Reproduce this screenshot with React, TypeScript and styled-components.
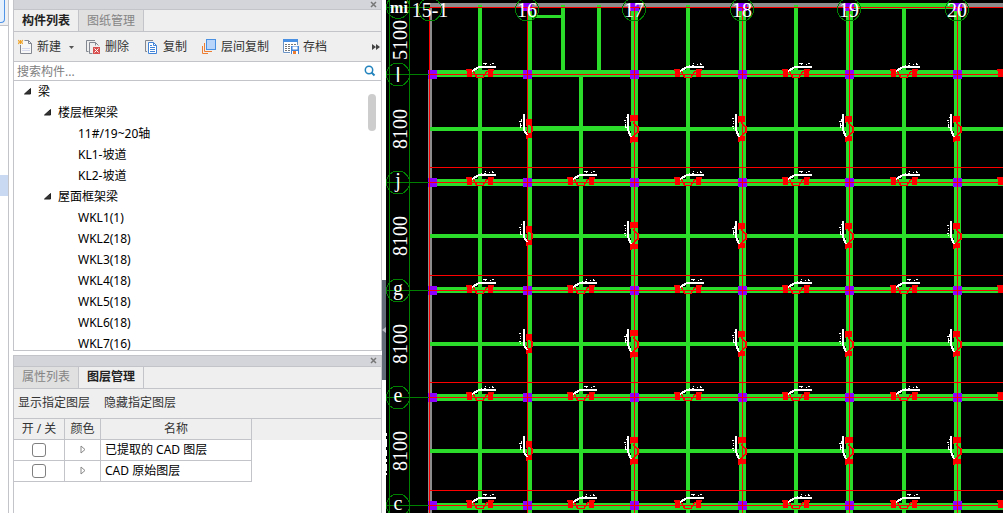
import React from "react";
import styled, { createGlobalStyle } from "styled-components";

const LINE = "#c3c4c9";
const BEAM = "#2bdc2b";
const AXIS = "#ff0000";
const COLUMN = "#8b00ff";
const GUIDE = "#008000";

const Global = createGlobalStyle`
  * { box-sizing: border-box; }
  html, body { margin: 0; background: #fff; }
  body, button, input { font-family: "Noto Sans", "Noto Sans CJK SC", sans-serif; font-size: 12px; }
  button { border: 0; padding: 0; background: none; color: inherit; }
`;

const Page = styled.main`
  display: flex;
  height: 100vh;
  overflow: hidden;
  background: #fff;
`;

const EdgeDock = styled.aside`
  flex: none;
  display: flex;
  flex-direction: column;
  width: 9px;
  border-right: 1px solid ${LINE};
`;
const EdgeHead = styled.div`
  height: 26px;
  background: #eff0f1;
  border-bottom: 1px solid ${LINE};
`;
const EdgeButton = styled.div`
  width: 5px;
  height: 23px;
  border: 1px solid #4f94e6;
  border-width: 0 1px 1px 0;
  border-radius: 0 0 4px 0;
  background: #e4f0fd;
`;
const EdgeSelection = styled.div`
  height: 21px;
  margin-top: 149px;
  background: #c9d9f1;
`;

const Dock = styled.section`
  flex: none;
  display: flex;
  flex-direction: column;
  gap: 4px;
  width: 369px;
  margin-left: 4px;
`;

const Panel = styled.section<{ $grow: number; $first?: boolean }>`
  flex: ${(p) => p.$grow} 1 0;
  min-height: 0;
  display: flex;
  flex-direction: column;
  overflow: hidden;
  border: 1px solid ${LINE};
  border-top-width: ${(p) => (p.$first ? 0 : 1)}px;
  border-bottom-width: ${(p) => (p.$first ? 1 : 0)}px;
`;

const TitleBar = styled.header<{ $h: number }>`
  flex: none;
  display: flex;
  justify-content: flex-end;
  align-items: center;
  height: ${(p) => p.$h}px;
  padding-right: 4px;
  background: #d3d5da;
  border-bottom: 1px solid ${LINE};
`;
const CloseButton = styled.button`
  display: flex;
`;

const Tabs = styled.div`
  flex: none;
  display: flex;
  height: 22px;
  background: #efefef;
  border-bottom: 1px solid ${LINE};
`;
const Tab = styled.button<{ $active?: boolean }>`
  width: 65px;
  border-right: 1px solid ${LINE};
  background: ${(p) => (p.$active ? "#efefef" : "#e0e0e0")};
  color: ${(p) => (p.$active ? "#222" : "#858585")};
  font-weight: ${(p) => (p.$active ? 700 : 400)};
  line-height: 20px;
`;

const Toolbar = styled.div<{ $gap: number }>`
  flex: none;
  display: flex;
  align-items: center;
  gap: ${(p) => p.$gap}px;
  height: 30px;
  padding: 0 1px 0 4px;
  background: #efefef;
  border-bottom: 1px solid ${LINE};
  color: #333;
`;
const ToolButton = styled.button`
  display: flex;
  align-items: center;
  gap: 3px;
  line-height: 18px;
  white-space: nowrap;
  svg { overflow: visible; }
`;
const MoreButton = styled(ToolButton)`
  margin-left: auto;
`;

const SearchRow = styled.label`
  flex: none;
  display: flex;
  align-items: center;
  height: 19px;
  padding: 0 5px 0 3px;
  border-bottom: 1px solid ${LINE};
`;
const SearchInput = styled.input`
  flex: 1;
  min-width: 0;
  height: 18px;
  padding: 0;
  border: 0;
  outline: 0;
  &::placeholder { color: #808080; opacity: 1; }
`;

const TreeArea = styled.div`
  flex: 1;
  min-height: 0;
  display: flex;
  justify-content: space-between;
  overflow: hidden;
`;
const Tree = styled.ul`
  margin: 0;
  padding: 0;
  list-style: none;
`;
const TreeRow = styled.li<{ $level: number }>`
  display: flex;
  align-items: center;
  gap: 7px;
  height: 21px;
  padding-left: ${(p) => 10 + p.$level * 20}px;
  line-height: 20px;
  color: #000;
  white-space: nowrap;
`;
const Twisty = styled.svg`
  flex: none;
  width: 7px;
  height: 7px;
`;
const TreeIndent = styled.span`
  width: 7px;
`;
const ScrollThumb = styled.div`
  width: 8px;
  height: 37px;
  margin: 13px 5px 0 0;
  border-radius: 4px;
  background: #cdcdcd;
`;

const LayerTable = styled.table`
  width: 100%;
  border-collapse: separate;
  border-spacing: 0;
  table-layout: fixed;
  th, td {
    height: 21px;
    padding: 0;
    border-right: 1px solid ${LINE};
    border-bottom: 1px solid ${LINE};
    line-height: 18px;
    text-align: center;
    font-weight: 400;
  }
  th { background: #efefef; color: #333; line-height: 20px; }
  th:last-child, td:last-child { border: 0; }
`;
const NameCell = styled.td`
  && { padding-left: 4px; text-align: left; }
`;
const Check = styled.input`
  appearance: none;
  display: block;
  width: 14px;
  height: 14px;
  margin: 0 auto;
  border: 1px solid #808080;
  border-radius: 3px;
  background: #fff;
`;
const ExpandButton = styled.button`
  display: block;
  margin: 0 auto;
  height: 9px;
  svg { display: block; }
`;

const Splitter = styled.div`
  flex: none;
  display: flex;
  flex-direction: column;
  justify-content: center;
  width: 4px;
  padding-top: 147px;
`;
const SplitterGrip = styled.button`
  display: flex;
  align-items: center;
  height: 100px;
  background: #626b78;
`;

const Viewport = styled.section`
  flex: 1;
  min-width: 0;
  background: #000;
  overflow: hidden;
`;
const Drawing = styled.svg`
  display: block;
  width: 100%;
  height: 100%;
`;
const AxisText = styled.text<{ $plain?: boolean }>`
  fill: #fff;
  font-family: ${(p) => (p.$plain ? '"Liberation Sans", sans-serif' : '"Liberation Serif", serif')};
  font-size: 20px;
  text-anchor: middle;
`;
const HeavyAxisText = styled(AxisText)`
  font-size: 16px;
  font-weight: 700;
`;

const CloseIcon = () => (
  <svg width="7" height="7" viewBox="0 0 7 7"><path d="M1 1l5 5M6 1L1 6" stroke="#777" strokeWidth="1.5" /></svg>
);
const NewIcon = () => (
  <svg width="16" height="16" viewBox="0 0 16 16" fill="none">
    <path d="M6.500 1.500H10.500L13.500 4.500V14.500H2.500V6" fill="#f7f7f7" stroke="#828790" />
    <path d="M10.500 1.500V4.500H13.500" stroke="#828790" />
    <path d="M4 9.500H12M4 11.500H12" stroke="#d6d8ec" />
    <path d="M0 1l5 4M5 1L0 5M2.500 1v4M0 3h5" stroke="#f0a020" />
  </svg>
);
const DeleteIcon = () => (
  <svg width="16" height="16" viewBox="0 0 16 16" fill="none" stroke="#828790">
    <path d="M9 1.500H.5V12.500H2.500" />
    <path d="M6.500 14.500H3.500V3.500H9.500L12.500 6.500" />
    <path d="M9.500 3.500V6.500" />
    <rect x="7" y="8" width="7" height="7" fill="#d95050" stroke="none" />
    <path d="M8.500 9.500l4 4M12.500 9.500l-4 4" stroke="#fff" />
  </svg>
);
const CopyIcon = () => (
  <svg width="16" height="16" viewBox="0 0 16 16" fill="none" stroke="#828790">
    <path d="M9 1.500H1.500V12.500H3" />
    <path d="M4.500 3.500H9.500L12.500 6.500V14.500H4.500Z" fill="#fff" stroke="#4284d8" />
    <path d="M9.500 3.500V6.500H12.500M6 8.500h5M6 10.500h5M6 12.500h5M6 6.500h2" stroke="#4284d8" />
  </svg>
);
const LayerCopyIcon = () => (
  <svg width="16" height="16" viewBox="0 0 16 16" fill="none">
    <rect x="4.500" y="0.500" width="9" height="10" fill="#b9d6fa" stroke="#4a90e2" />
    <path d="M2.500 4V12.500H10M.5 7V14.500H6" stroke="#ed7d31" />
  </svg>
);
const SaveIcon = () => (
  <svg width="16" height="16" viewBox="0 0 16 16" fill="none">
    <path d="M-.5.500H13.500V14.500H-.5Z" fill="#fff" />
    <path d="M-.5 13.500V.500H13.500V6M-.5 13.500H6" stroke="#6b94c4" />
    <path d="M-1 1.500H14" stroke="#4a90e2" strokeWidth="3" />
    <path d="M1 5.500H12M1 7.500H6M1 9.500H6M1 11.500H6" stroke="#777" strokeDasharray="2 1" />
    <path d="M7 7H15V15H7Z" fill="#4284d8" />
    <path d="M8.500 7.500H13.500V10.500H8.500Z" fill="#fff" />
    <path d="M8 12H14V15H8Z" fill="#fff" />
    <path d="M9 12H12V15H9Z" fill="#ed7d31" />
  </svg>
);
const SearchIcon = () => (
  <svg width="12" height="12" viewBox="0 0 12 12" fill="none" stroke="#2384bd">
    <circle cx="5" cy="5" r="3.700" strokeWidth="1.500" />
    <path d="M7.500 7.500L10.500 10.500" strokeWidth="2" />
  </svg>
);

const treeItems: { level: number; label: string; open?: boolean }[] = [
  { level: 0, label: "梁", open: true },
  { level: 1, label: "楼层框架梁", open: true },
  { level: 2, label: "11#/19~20轴" },
  { level: 2, label: "KL1-坡道" },
  { level: 2, label: "KL2-坡道" },
  { level: 1, label: "屋面框架梁", open: true },
  { level: 2, label: "WKL1(1)" },
  { level: 2, label: "WKL2(18)" },
  { level: 2, label: "WKL3(18)" },
  { level: 2, label: "WKL4(18)" },
  { level: 2, label: "WKL5(18)" },
  { level: 2, label: "WKL6(18)" },
  { level: 2, label: "WKL7(16)" },
];

const layers = ["已提取的 CAD 图层", "CAD 原始图层"];

// Plan data, in drawing units (one unit is one pixel).
const FAR = 3000;
const axisRows = [
  { y: 74, name: "l", top: 70, h: 7 },
  { y: 182, name: "j", top: 179, h: 7 },
  { y: 290, name: "g", top: 287, h: 6 },
  { y: 397, name: "e", top: 394, h: 7 },
  { y: 505, name: "c", top: 503, h: 7 },
];
const axisCols = [
  { x: 527, name: "16", left: 528, w: 4 },
  { x: 634, name: "17", left: 631, w: 7 },
  { x: 742, name: "18", left: 739, w: 7 },
  { x: 849, name: "19", left: 846, w: 7 },
  { x: 957, name: "20", left: 954, w: 7 },
];
const midRows = [127, 234, 342, 449];
const midCols = [
  { x: 478, y: 5 }, { x: 579, y: 77 }, { x: 686, y: 5 }, { x: 794, y: 5 }, { x: 902, y: 9 },
];
const rowMarks = [480, 581, 688, 796, 904, 1011];

/** Support symbol with its leader, on a horizontal beam. */
const RowMark = ({ x, y, n }: { x: number; y: number; n: number }) => (
  <g transform={`translate(${x} ${y})`}>
    <path d="M-14-5h6v8h-5v-6h-1zM8-5h6v2h-1v6h-5z" fill={AXIS} />
    <path d="M-7-3L-3 3.500H3L7-3" fill="none" stroke={AXIS} strokeWidth="1.500" />
    <path d="M-8-3L-1-7" fill="none" stroke="#fff" strokeWidth="2" />
    <rect x="-1" y="-8" width="17" height="2" fill="#fff" />
    <path
      d={n % 2 ? "M1-8.500h1m2 0h2m3-1h1m2 0h2M5-10.500h1m6 0h1" : "M3-10.500h4m-2 1h1m4 0h1m1-1h2"}
      fill="none" stroke="#fff"
    />
  </g>
);

/** Support symbol with its leader, on a vertical beam. */
const ColMark = ({ x, y, slim, tall, n }: { x: number; y: number; slim: boolean; tall: boolean; n: number }) => {
  const reach = slim ? 10 : tall ? 14 : 13;
  const w = slim ? 6 : tall ? 8 : 7;
  const left = slim ? -1 : -4;
  return (
    <g transform={`translate(${x} ${y})`}>
      <path d={`M${left}-${reach}h${w}v6h-${w - 1}v1h-1zM${left} ${reach - 6}h${w}v5h-${w - 2}v1h-2z`} fill={AXIS} />
      <path
        d={slim ? "M1-5Q5-5 5-1V1Q5 5 1 6" : "M-1-6L4-2V3L-2 8"}
        fill="none" stroke={AXIS} strokeWidth="1.500"
      />
      <path d={slim ? "M-3-15V1L0 6" : "M-6-15V1L-3 8"} fill="none" stroke="#fff" strokeWidth="2" />
      <path
        transform={`translate(${slim ? 2 : 0} 0)`}
        d={n % 3 === 0 ? "M-8-10v2h-2m1 2v2h2m-2 1v2" : n % 3 === 1 ? "M-8-12v1m-2 2h2m-1 2v1m0 1v3h2" : "M-8-11h-2m1 3h1m-1 2h1m-2 3h2m-1 2h1"}
        fill="none" stroke="#fff"
      />
    </g>
  );
};

const Plan = () => (
  <Drawing role="img" aria-label="梁平面图">
    <g transform="translate(-386 0)" shapeRendering="crispEdges">
      <rect x="430" y="3" width={FAR} height="4" fill="#8c8c8c" />
      <rect x="430" y="3" width="2" height="80" fill="#8c8c8c" />
      <rect x="428" y="78" width="4" height={FAR} fill="#8c8c8c" />
      <g fill={BEAM}>
        {midRows.map((y) => <rect key={y} x="430" y={y} width={FAR} height="4" />)}
        <rect x="532" y="126" width="100" height="5" />
        {midCols.map((c) => <rect key={c.x} x={c.x} y={c.y} width="4" height={FAR} />)}
        <rect x="561" y="5" width="4" height="65" />
        <rect x="597" y="5" width="4" height="65" />
        <rect x="532" y="15" width="30" height="3" />
        <rect x="849" y="3" width="108" height="6" />
        {axisRows.map((r) => <rect key={r.y} x="432" y={r.top} width={FAR} height={r.h} />)}
        {axisCols.map((c) => <rect key={c.x} x={c.left} y="8" width={c.w} height={FAR} />)}
      </g>
      <g fill={COLUMN}>
        {axisRows.map((r) => (
          <React.Fragment key={r.y}>
            <rect x="428" y={r.y - 4} width="9" height="9" />
            {axisCols.map((c) => <rect key={c.x} x={c.x - 4} y={r.y - 4} width="9" height="9" />)}
          </React.Fragment>
        ))}
        {axisCols.map((c) => <rect key={c.x} x={c.x - 4} y="3" width="9" height="8" />)}
      </g>
      <g fill={AXIS}>
        <rect x="429" y="7" width="1" height={FAR} />
        <rect x="430" y="7" width={FAR} height="1" />
        {axisRows.map((r) => <rect key={r.y} x="430" y={r.y} width={FAR} height="1" />)}
        {[167, 275, 382, 490].map((y) => <rect key={y} x="430" y={y} width={FAR} height="1" />)}
        {axisCols.map((c) => <rect key={c.x} x={c.x} y="8" width="1" height={FAR} />)}
      </g>
      {axisRows.map((r, i) =>
        rowMarks.filter((x) => i > 0 || x !== 581).map((x, k) => <RowMark key={`${i}-${x}`} x={x} y={r.y} n={i + k} />)
      )}
      {midRows.map((y, i) =>
        axisCols.map((c, k) => (
          <ColMark key={`${i}-${c.x}`} x={c.x} y={y + 2} slim={k === 0} tall={k === 1 || (i === 3 && k > 0)} n={i + k} />
        ))
      )}
      <g fill="none" stroke={GUIDE}>
        <path d={`M389.500 0V${FAR}M409.500 0V${FAR}`} />
        <circle cx="398" cy="7" r="11.500" />
        <path d="M386 7.500H430" />
        {axisRows.map((r) => (
          <React.Fragment key={r.y}>
            <circle cx="398" cy={r.y + 0.5} r="11.500" />
            <path d={`M386 ${r.y + 0.5}H429`} />
          </React.Fragment>
        ))}
        <circle cx="430" cy="9.500" r="11.500" />
        {axisCols.map((c) => <circle key={c.x} cx={c.x} cy="9.500" r="11.500" />)}
      </g>
      <HeavyAxisText x="399" y="13">mi</HeavyAxisText>
      <AxisText x="430" y="17">15-1</AxisText>
      {axisCols.map((c) => <AxisText key={c.x} x={c.x} y="17">{c.name}</AxisText>)}
      {axisRows.map((r) => (
        <AxisText key={r.y} x="398" y={r.y + (r.name === "l" ? 8 : 5)} $plain={r.name === "l"}>{r.name}</AxisText>
      ))}
      <AxisText transform="translate(407 40) rotate(-90)">5100</AxisText>
      {midRows.map((y) => <AxisText key={y} transform={`translate(407 ${y + 2}) rotate(-90)`}>8100</AxisText>)}
      <path d="M386.500 433v3m0 3v8m0 3v6m0 3v3m0 2v7m0 2v2" stroke="#fff" />
    </g>
  </Drawing>
);

export default function App() {
  return (
    <>
      <Global />
      <Page>
        <EdgeDock>
          <EdgeHead><EdgeButton /></EdgeHead>
          <EdgeSelection />
        </EdgeDock>
        <Dock>
          <Panel $grow={351} $first>
            <TitleBar $h={10}><CloseButton aria-label="关闭"><CloseIcon /></CloseButton></TitleBar>
            <Tabs role="tablist">
              <Tab role="tab" aria-selected $active>构件列表</Tab>
              <Tab role="tab">图纸管理</Tab>
            </Tabs>
            <Toolbar $gap={15}>
              <ToolButton>
                <NewIcon />新建
                <svg width="7" height="4" viewBox="0 0 7 4"><path d="M5 1h5l-2.500 3z" fill="#555" /></svg>
              </ToolButton>
              <ToolButton><DeleteIcon />删除</ToolButton>
              <ToolButton><CopyIcon />复制</ToolButton>
              <ToolButton><LayerCopyIcon />层间复制</ToolButton>
              <ToolButton><SaveIcon />存档</ToolButton>
              <MoreButton aria-label="更多">
                <svg width="8" height="6" viewBox="0 0 8 6"><path d="M0 0l4 3-4 3zM4 0l4 3-4 3z" fill="#444" /></svg>
              </MoreButton>
            </Toolbar>
            <SearchRow>
              <SearchInput type="text" aria-label="搜索构件" placeholder="搜索构件..." />
              <SearchIcon />
            </SearchRow>
            <TreeArea>
              <Tree>
                {treeItems.map((item) => (
                  <TreeRow key={item.label} $level={item.level}>
                    {item.open
                      ? <Twisty viewBox="0 0 7 7"><path d="M6.500.5V6H.5z" fill="#333" stroke="#222" /></Twisty>
                      : <TreeIndent />}
                    {item.label}
                  </TreeRow>
                ))}
              </Tree>
              <ScrollThumb />
            </TreeArea>
          </Panel>
          <Panel $grow={158}>
            <TitleBar $h={11}><CloseButton aria-label="关闭"><CloseIcon /></CloseButton></TitleBar>
            <Tabs role="tablist">
              <Tab role="tab">属性列表</Tab>
              <Tab role="tab" aria-selected $active>图层管理</Tab>
            </Tabs>
            <Toolbar $gap={14}>
              <ToolButton>显示指定图层</ToolButton>
              <ToolButton>隐藏指定图层</ToolButton>
            </Toolbar>
            <LayerTable>
              <colgroup>
                <col style={{ width: 51 }} /><col style={{ width: 36 }} /><col style={{ width: 151 }} /><col />
              </colgroup>
              <thead>
                <tr><th>开 / 关</th><th>颜色</th><th>名称</th><th /></tr>
              </thead>
              <tbody>
                {layers.map((name) => (
                  <tr key={name}>
                    <td><Check type="checkbox" aria-label={name} /></td>
                    <td>
                      <ExpandButton aria-label="颜色">
                        <svg width="6" height="9" viewBox="0 0 6 9"><path d="M1 1l4 3.500L1 8z" fill="none" stroke="#888" /></svg>
                      </ExpandButton>
                    </td>
                    <NameCell>{name}</NameCell>
                    <td />
                  </tr>
                ))}
              </tbody>
            </LayerTable>
          </Panel>
        </Dock>
        <Splitter>
          <SplitterGrip aria-label="收起面板">
            <svg width="4" height="6" viewBox="0 0 4 6"><path d="M4 0L0 3l4 3z" fill="#b8bcc4" /></svg>
          </SplitterGrip>
        </Splitter>
        <Viewport><Plan /></Viewport>
      </Page>
    </>
  );
}
